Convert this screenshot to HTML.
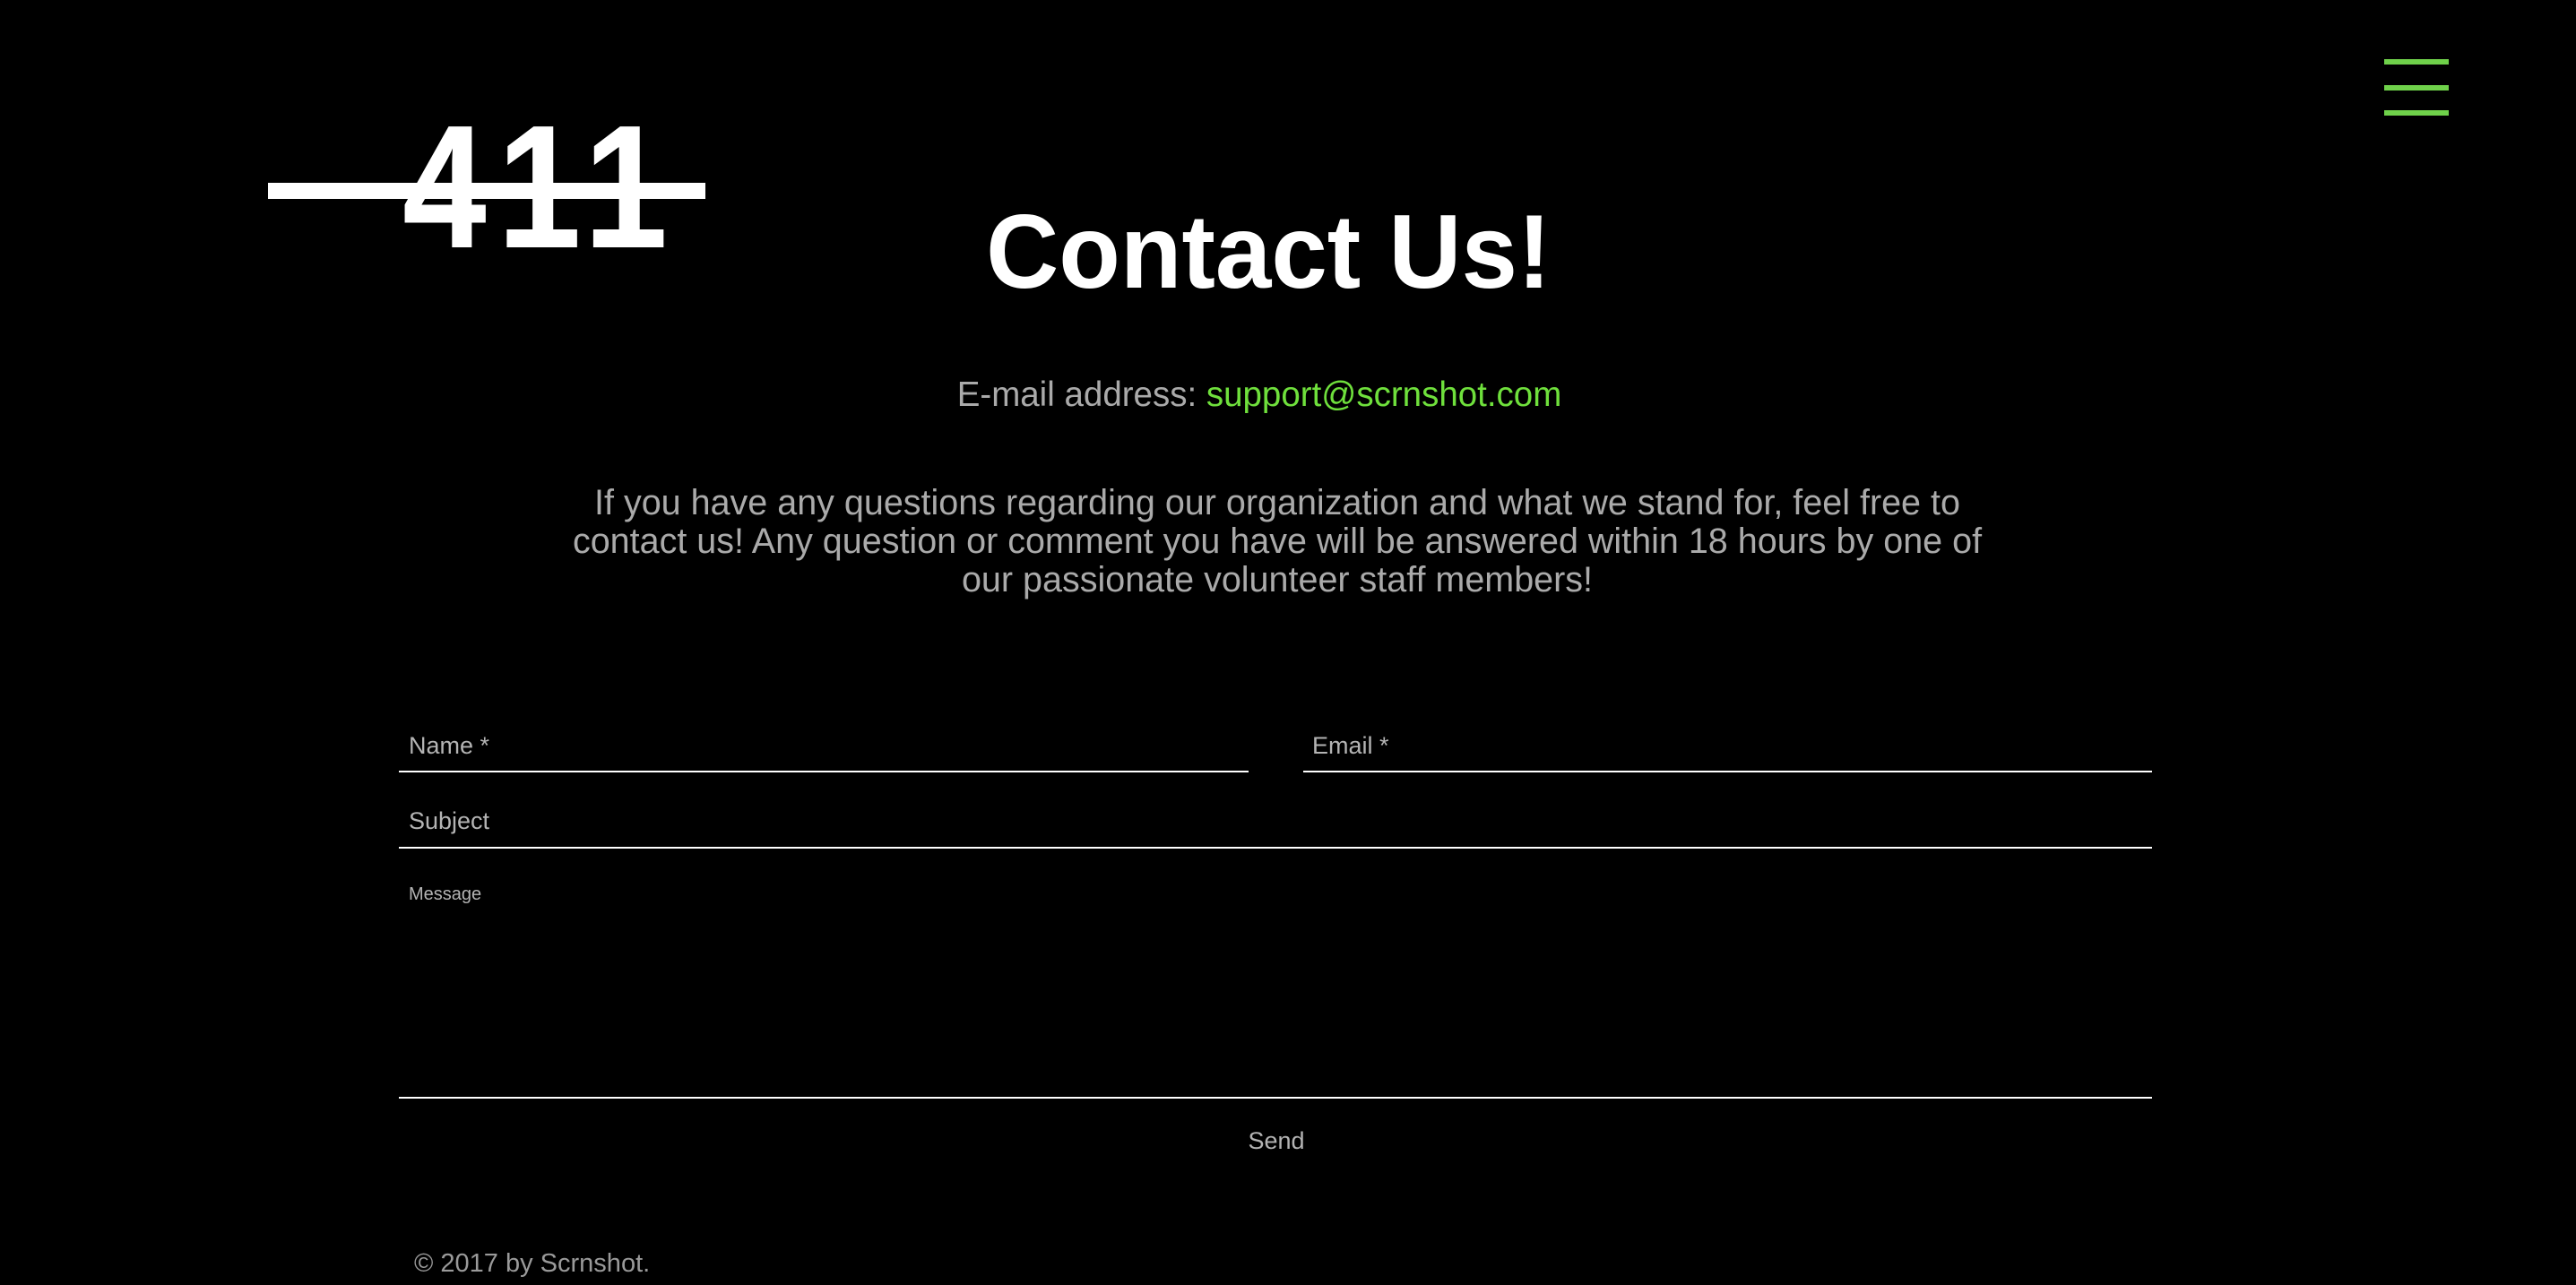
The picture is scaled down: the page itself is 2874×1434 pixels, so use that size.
<!DOCTYPE html>
<html><head><meta charset="utf-8"><style>
html,body{margin:0;padding:0;background:#000;}
body{width:2874px;height:1434px;position:relative;overflow:hidden;font-family:"Liberation Sans",sans-serif;}
.a{position:absolute;white-space:nowrap;}
.bar{position:absolute;background:#6fd14a;left:2660px;width:72px;height:6px;}
.line{position:absolute;background:#fff;height:2px;}
.lbl{position:absolute;color:#b4b4b4;font-size:27px;line-height:30px;white-space:nowrap;}
</style></head><body>
<div class="a" style="left:449px;top:104px;font-size:196px;font-weight:bold;color:#fff;line-height:210px;transform:scaleX(0.86);transform-origin:left top;letter-spacing:14px;">411</div>
<div style="position:absolute;left:299px;top:204px;width:488px;height:18px;background:#fff;"></div>
<div class="bar" style="top:66px"></div>
<div class="bar" style="top:95px"></div>
<div class="bar" style="top:123px"></div>
<div class="a" style="left:0;width:2830px;text-align:center;top:211px;font-size:117px;font-weight:bold;color:#fff;line-height:140px;"><span style="display:inline-block;transform:scaleX(0.96);">Contact Us!</span></div>
<div class="a" style="left:0;width:2810px;text-align:center;top:419px;font-size:38.5px;color:#aaa;line-height:44px;">E-mail address: <span style="color:#6fe03c">support@scrnshot.com</span></div>
<div class="a" style="left:0;width:2850px;text-align:center;top:540px;font-size:39.5px;color:#aaa;line-height:43px;">If you have any questions regarding our organization and what we stand for, feel free to<br>contact us! Any question or comment you have will be answered within 18 hours by one of<br>our passionate volunteer staff members!</div>
<div class="lbl" style="left:456px;top:817px;">Name *</div>
<div class="line" style="left:445px;top:860px;width:948px;"></div>
<div class="lbl" style="left:1464px;top:817px;">Email *</div>
<div class="line" style="left:1454px;top:860px;width:947px;"></div>
<div class="lbl" style="left:456px;top:901px;">Subject</div>
<div class="line" style="left:445px;top:945px;width:1956px;"></div>
<div class="lbl" style="left:456px;top:986px;font-size:20px;line-height:24px;">Message</div>
<div class="line" style="left:445px;top:1224px;width:1956px;"></div>
<div class="lbl" style="left:0;width:2848px;text-align:center;top:1258px;">Send</div>
<div class="lbl" style="left:462px;top:1395px;font-size:29px;color:#9a9a9a;">© 2017 by Scrnshot.</div>
</body></html>
